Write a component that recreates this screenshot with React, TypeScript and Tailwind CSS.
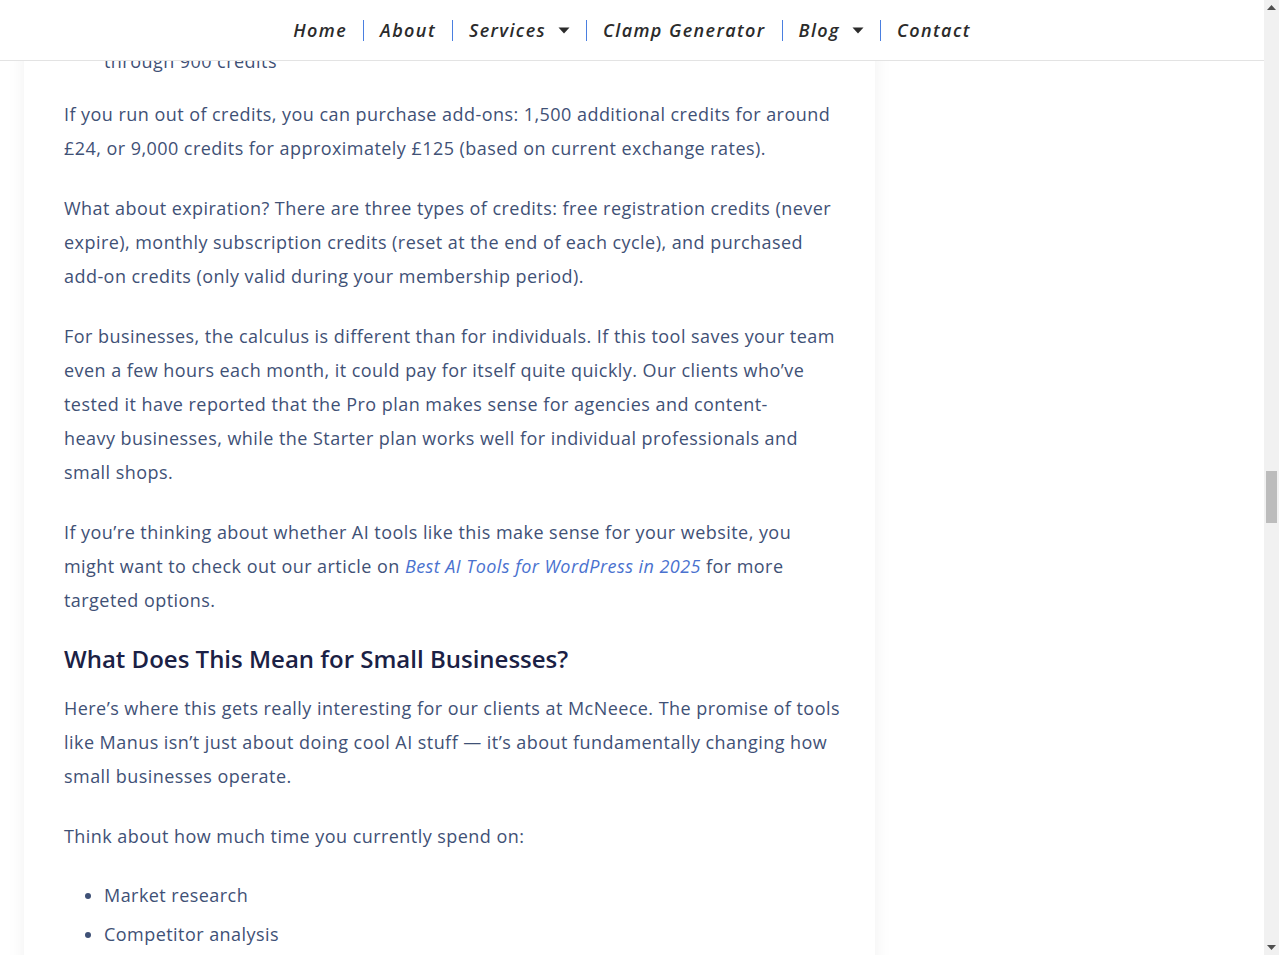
import React from "react";

const Caret = () => (
  <svg width="12" height="7" viewBox="0 0 12 7" className="ml-[12px] shrink-0" aria-hidden>
    <path d="M0.5 0.5 L11.5 0.5 L6 6.5 Z" fill="#2b2b2b" />
  </svg>
);

const navItems: { label: string; caret?: boolean }[] = [
  { label: "Home" },
  { label: "About" },
  { label: "Services", caret: true },
  { label: "Clamp Generator" },
  { label: "Blog", caret: true },
  { label: "Contact" },
];

export default function App() {
  const body = "text-[#3f5176] text-[18px] tracking-[0.45px] leading-[34px] whitespace-nowrap";
  return (
    <div
      className="flex h-[955px] w-full overflow-hidden bg-white"
      style={{ fontFamily: '"Open Sans", "Liberation Sans", sans-serif' }}
    >
      <div className="flex min-w-0 flex-1 flex-col overflow-hidden">
        <header className="relative z-10 flex h-[61px] shrink-0 items-center justify-center border-b border-[#e3e3e3] bg-white">
          <nav className="flex items-center">
            {navItems.map((it, i) => (
              <div
                key={it.label}
                className={
                  "flex h-[21px] items-center px-4 " +
                  (i > 0 ? "border-l border-[#4a7fe0]" : "")
                }
              >
                <span className="text-[18px] font-semibold italic leading-[21px] tracking-[1.4px] text-[#2b2b2b] whitespace-nowrap">
                  {it.label}
                </span>
                {it.caret ? <Caret /> : null}
              </div>
            ))}
          </nav>
        </header>
        <main className="-mt-[17px] flex-1">
          <article className="ml-[24px] w-[851px] bg-white px-10 pb-10 shadow-[0_0_18px_rgba(0,0,0,0.06)]">
            <ul className={"mb-[19px] pl-10 " + body}>
              <li className="list-none">through 900 credits</li>
            </ul>
            <p className={"mb-[26px] " + body}>
              If you run out of credits, you can purchase add-ons: 1,500 additional credits for around
              <br />
              £24, or 9,000 credits for approximately £125 (based on current exchange rates).
            </p>
            <p className={"mb-[26px] " + body}>
              What about expiration? There are three types of credits: free registration credits (never
              <br />
              expire), monthly subscription credits (reset at the end of each cycle), and purchased
              <br />
              add-on credits (only valid during your membership period).
            </p>
            <p className={"mb-[26px] " + body}>
              For businesses, the calculus is different than for individuals. If this tool saves your team
              <br />
              even a few hours each month, it could pay for itself quite quickly. Our clients who’ve
              <br />
              tested it have reported that the Pro plan makes sense for agencies and content-
              <br />
              heavy businesses, while the Starter plan works well for individual professionals and
              <br />
              small shops.
            </p>
            <p className={body}>
              If you’re thinking about whether AI tools like this make sense for your website, you
              <br />
              might want to check out our article on{" "}
              <a href="#" className="italic text-[#4a72cf]">
                Best AI Tools for WordPress in 2025
              </a>{" "}
              for more
              <br />
              targeted options.
            </p>
            <h2 className="mt-[27px] mb-[18px] text-[24px] font-[550] leading-[29px] tracking-[0px] text-[#1b2145] whitespace-nowrap">
              What Does This Mean for Small Businesses?
            </h2>
            <p className={"mb-[26px] " + body}>
              Here’s where this gets really interesting for our clients at McNeece. The promise of tools
              <br />
              like Manus isn’t just about doing cool AI stuff — it’s about fundamentally changing how
              <br />
              small businesses operate.
            </p>
            <p className={"mb-[25px] " + body}>Think about how much time you currently spend on:</p>
            <ul className={"list-disc pl-10 marker:text-[#3f5176] " + body}>
              <li className="mb-[5px]">Market research</li>
              <li className="mb-[5px]">Competitor analysis</li>
            </ul>
          </article>
        </main>
      </div>
      <div className="flex w-[15px] shrink-0 flex-col items-center bg-[#f1f1f1]">
        <div className="flex h-[15px] w-full items-center justify-center">
          <svg width="9" height="5" viewBox="0 0 9 5" aria-hidden>
            <path d="M0 5 L4.5 0 L9 5 Z" fill="#505050" />
          </svg>
        </div>
        <div className="flex w-full flex-1 flex-col items-center">
          <div className="mt-[456px] h-[52px] w-[11px] bg-[#bcbcbc]" />
        </div>
        <div className="flex h-[15px] w-full items-center justify-center">
          <svg width="9" height="5" viewBox="0 0 9 5" aria-hidden>
            <path d="M0 0 L9 0 L4.5 5 Z" fill="#505050" />
          </svg>
        </div>
      </div>
    </div>
  );
}
